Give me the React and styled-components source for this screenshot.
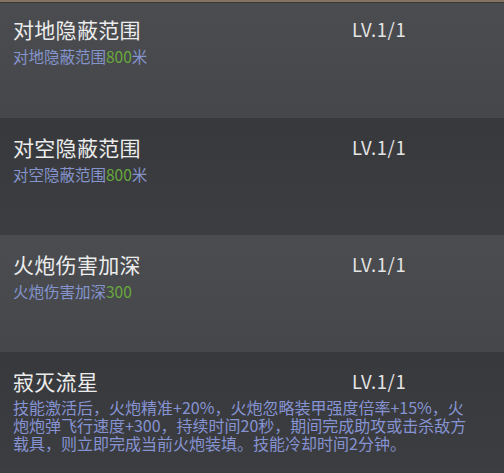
import styled, { createGlobalStyle } from "styled-components";

const skills = [
  { name: "对地隐蔽范围", text: "对地隐蔽范围", value: "800", unit: "米" },
  { name: "对空隐蔽范围", text: "对空隐蔽范围", value: "800", unit: "米" },
  { name: "火炮伤害加深", text: "火炮伤害加深", value: "300", unit: "" },
];

const App = () => {
  return (
    <>
      <GlobalStyle />
      <Panel>
        <TopEdge />
        {skills.map((s, i) => (
          <Card key={s.name} $dark={i % 2 === 1} $first={i === 0}>
            <Title>{s.name}</Title>
            <Level>LV.1/1</Level>
            <Effect>
              {s.text}
              <Num>{s.value}</Num>
              {s.unit}
            </Effect>
          </Card>
        ))}
        <Card $dark>
          <Title>寂灭流星</Title>
          <Level>LV.1/1</Level>
          <Desc>
            技能激活后，火炮精准+20%，火炮忽略装甲强度倍率+15%，火炮炮弹飞行速度+300，持续时间20秒，期间完成助攻或击杀敌方载具，则立即完成当前火炮装填。技能冷却时间2分钟。
          </Desc>
        </Card>
        <BottomEdge />
      </Panel>
    </>
  );
};

export default App;

const GlobalStyle = createGlobalStyle`
  html, body {
    margin: 0;
    padding: 0;
    background: #38393c;
  }
  body {
    font-family: "Noto Sans CJK SC", "Noto Sans", sans-serif;
  }
`;

const Panel = styled.div`
  width: 504px;
  height: 473px;
  overflow: hidden;
  display: flex;
  flex-direction: column;
`;

const TopEdge = styled.div`
  height: 2px;
  background: #85745f;
  border-bottom: 1px solid #3c3a38;
`;

const BottomEdge = styled.div`
  flex: 1;
  background: #3d3e41;
`;

const Card = styled.div`
  height: ${(p) => (p.$first ? "115px" : "117px")};
  box-sizing: border-box;
  padding: ${(p) => (p.$first ? "14px" : "17px")} 0 0 13px;
  display: grid;
  grid-template-columns: 339px 1fr;
  grid-template-rows: 25px auto;
  row-gap: 4px;
  align-content: start;
  background: ${(p) =>
    p.$dark
      ? "linear-gradient(180deg, #38393c 0%, #3c3d40 100%)"
      : "linear-gradient(180deg, #4a4c4f 0%, #45474a 100%)"};
`;

const Title = styled.div`
  font-size: 21px;
  line-height: 25px;
  color: #ececec;
  letter-spacing: 0.3px;
`;

const Level = styled.div`
  font-size: 18.5px;
  line-height: 25px;
  letter-spacing: 0.6px;
  color: #e4e4e4;
`;

const Effect = styled.div`
  grid-column: 1 / -1;
  font-size: 15.5px;
  line-height: 20px;
  color: #8594cc;
`;

const Num = styled.span`
  color: #68a83c;
`;

const Desc = styled.div`
  grid-column: 1 / -1;
  width: 458px;
  font-size: 16px;
  line-height: 18px;
  color: #8593d2;
`;
